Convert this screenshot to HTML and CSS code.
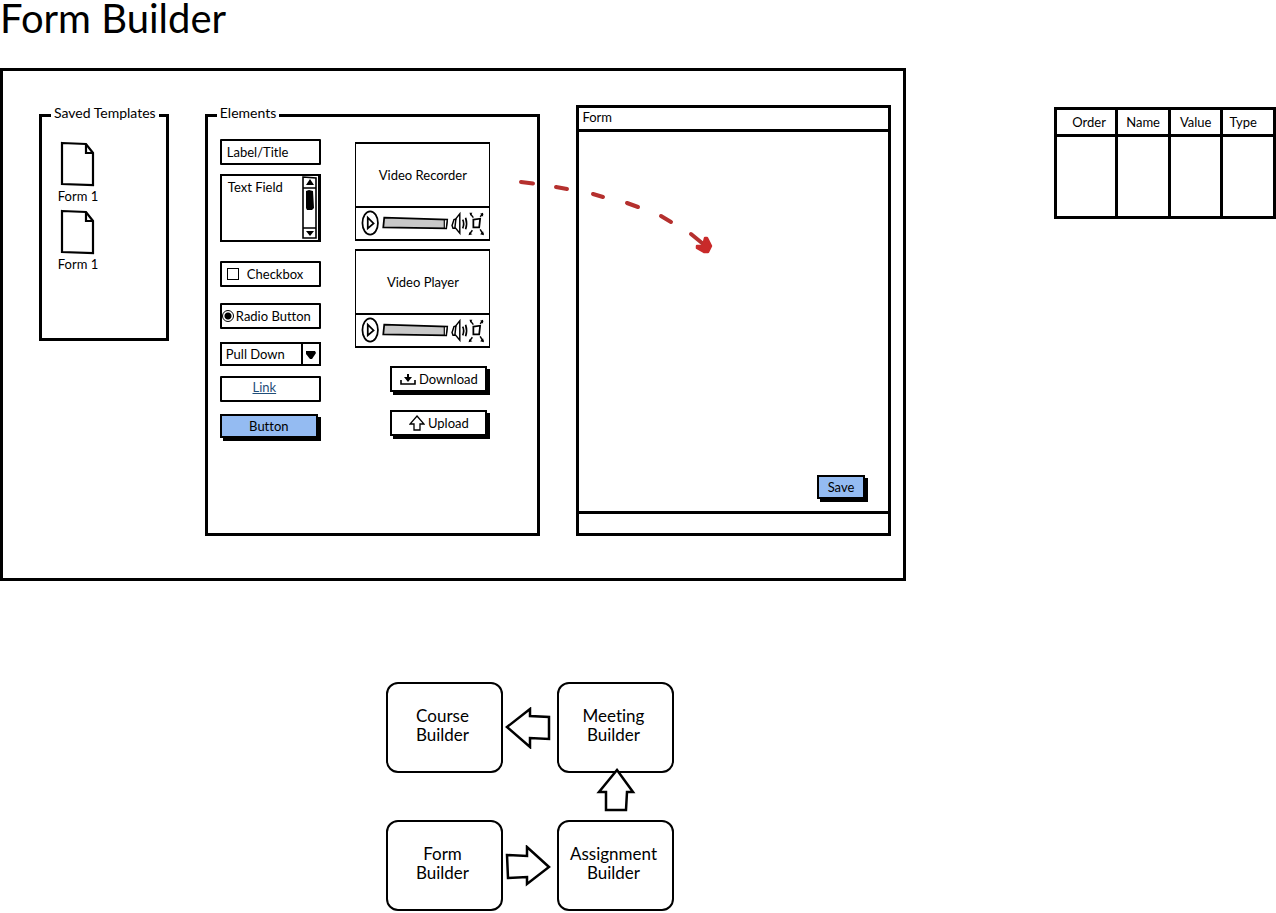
FILE: index.html
```html
<!DOCTYPE html>
<html lang="en">
<head>
<meta charset="utf-8">
<title>Form Builder</title>
<link rel="stylesheet" href="styles.css">
</head>
<body>
<svg class="defs" aria-hidden="true">
  <symbol id="file" viewBox="0 0 36 46">
    <path d="M2 2 26 3 33 12V44L2 43Z" fill="#fff" stroke="#000" stroke-width="2.2"/>
    <path d="M26 3V12L33 12" fill="none" stroke="#000" stroke-width="2.2"/>
  </symbol>
  <symbol id="controls" viewBox="0 0 131 32">
    <g fill="none" stroke="#000" stroke-width="1.8">
      <ellipse cx="11.500" cy="15.500" rx="8" ry="12"/>
      <path d="M9 10 15 16 9 21Z"/>
      <path d="M26 10 91 12 90 21 25 20Z" fill="#c8c8c8"/>
      <path d="M88 12 91 12 90 21 88 21Z" fill="#fff" stroke-width="1.2"/>
      <path d="M101 11 98 12 96 18 97 21 100 21M100 11 104 6V26L99 20Z" stroke-width="1.5"/>
      <path d="M107 12Q109 16 107 21M110 10Q112 16 110 22" stroke-width="1.7"/>
      <path d="M118 12 125 11 124 20 118 20Z"/>
      <path d="M115 6 118 10M128 6 125 9M114 27 117 23M128 27 125 22" stroke-width="1.5"/>
    </g>
    <path d="M114 5 117 5 115 8ZM128 5 125 6 128 9ZM113 28 114 25 117 27ZM129 28 125 27 128 24Z"/>
  </symbol>
</svg>
<main>
  <h1>Form Builder</h1>
  <div class="top">
    <section class="board">
      <fieldset class="saved">
        <legend>Saved Templates</legend>
        <figure><svg class="file"><use href="#file"/></svg><figcaption>Form 1</figcaption></figure>
        <figure><svg class="file"><use href="#file"/></svg><figcaption>Form 1</figcaption></figure>
      </fieldset>

      <fieldset class="elements">
        <legend>Elements</legend>
        <div class="palette">
          <div class="column">
            <div class="item title-item">Label/Title</div>
            <div class="textbox">
              <textarea aria-label="Text Field">Text Field</textarea>
              <svg class="scrollbar" viewBox="0 0 16 64" aria-hidden="true">
                <path d="M1 1 14 2V62H1ZM1 12H14M1 52H14" fill="#fff" stroke="#000" stroke-width="1.6"/>
                <path d="M4 9 8 3 12 9ZM4 55H12L8 60ZM4 15 7 14 11 15 12 32 10 34H5L4 32Z"/>
              </svg>
            </div>
            <label class="item check-item"><input type="checkbox">Checkbox</label>
            <label class="item radio-item"><input type="radio" checked>Radio Button</label>
            <div class="pulldown">
              <select aria-label="Pull Down"><option>Pull Down</option></select>
              <svg viewBox="0 0 16 20" aria-hidden="true"><path d="M3 7 12 7 13 9 9 15H7L3 10Z"/></svg>
            </div>
            <div class="item link-item"><a href="#link">Link</a></div>
            <button class="btn blue">Button</button>
          </div>
          <div class="column media">
            <div class="video"><p>Video Recorder</p><svg><use href="#controls"/></svg></div>
            <div class="video"><p>Video Player</p><svg><use href="#controls"/></svg></div>
            <button class="btn"><svg viewBox="0 0 16 12"><path d="M1 7V11H15V7" fill="none" stroke="#000" stroke-width="1.6"/><path d="M7 1H9V4H12L8 9 4 4H7Z"/></svg>Download</button>
            <button class="btn"><svg class="up" viewBox="0 0 16 16"><path d="M8 1 15 9H11V15H5V9H1Z" fill="#fff" stroke="#000" stroke-width="1.3"/></svg>Upload</button>
          </div>
        </div>
      </fieldset>

      <section class="window">
        <header>Form</header>
        <div class="canvas"><button class="btn blue">Save</button></div>
        <footer></footer>
      </section>

      <svg class="drag" viewBox="0 0 200 80" aria-hidden="true">
        <path d="M8 7 20 8.500M43 12 54 14M80 19 90 22M114 28 125 32M148 41 158 47M178 59 189 68" fill="none" stroke="#b5302e" stroke-width="4" stroke-linecap="round"/>
        <path d="M192 63 194 63 198 71 195 77 191 77 184 73 184 71 190 71Z" fill="#c92a2a" stroke="#c92a2a" stroke-width="2.5" stroke-linejoin="round"/>
      </svg>
    </section>

    <table>
      <colgroup><col class="wide"><col><col><col></colgroup>
      <thead><tr><th>Order</th><th>Name</th><th>Value</th><th>Type</th></tr></thead>
      <tbody><tr><td></td><td></td><td></td><td></td></tr></tbody>
    </table>
  </div>

  <section class="flow">
    <div class="node">Course<br>Builder</div>
    <svg class="arrow" viewBox="0 0 46 42"><path d="M2 20 25 2V9L44 10V32L25 31V40Z"/></svg>
    <div class="node">Meeting<br>Builder</div>
    <svg class="arrow up-arrow" viewBox="0 0 40 44"><path d="M21 2 37 24 31 24 30 42 10 42 10 24 3 24Z"/></svg>
    <div class="node">Form<br>Builder</div>
    <svg class="arrow" viewBox="0 0 46 42"><path d="M2 10 22 11V2L44 22 22 39V32L3 33Z"/></svg>
    <div class="node">Assignment<br>Builder</div>
  </section>
</main>
</body>
</html>
```
FILE: styles.css
```css
* { box-sizing: border-box; }
body {
  margin: 0;
  background: #fff;
  color: #000;
  font: 13px/16px Lato, "Liberation Sans", sans-serif;
  font-variant-ligatures: none;
}
h1 { margin: 0; padding-bottom: 32px; font-size: 40px; line-height: 36px; font-weight: 400; }
input, textarea, select, button { margin: 0; font: inherit; color: inherit; }
.defs { display: none; }
svg { display: block; }

.top { display: grid; grid-template-columns: 906fr 222fr; column-gap: 148px; align-items: start; }
.board {
  position: relative;
  display: grid;
  grid-template-columns: 130fr 336fr 315fr;
  column-gap: 36px;
  padding: 34px 12px 42px 36px;
  border: 3px solid #000;
}
fieldset { min-width: 0; margin: 0; border: 3px solid #000; }
legend { margin: 0; padding: 0 3px 4px; font-size: 14px; white-space: nowrap; }
.saved { align-self: start; padding: 16px 16px 61px; }
.saved legend { margin-left: -7px; }
figure { display: flex; flex-direction: column; align-items: center; width: 40px; margin: 0 0 4px; white-space: nowrap; }
.file { width: 36px; height: 46px; }
figcaption { margin-top: 1px; padding-bottom: 1px; }

.elements { padding: 0 12px 89px; }
.elements legend { margin-left: -3px; }
.palette { display: flex; justify-content: space-between; padding-top: 14px; padding-right: 35px; }
.column { display: flex; flex-direction: column; width: 101px; }
.item { display: flex; align-items: center; height: 26px; border: 2px solid #000; border-radius: 1px; white-space: nowrap; }
.title-item { padding-left: 5px; }
.textbox { display: flex; height: 68px; margin-top: 9px; border: 2px solid #000; border-right-width: 3px; }
textarea { flex: 1; min-width: 0; padding: 3px 0 0 6px; border: 0; outline: 0; resize: none; overflow: hidden; background: none; }
.scrollbar { width: 16px; height: 64px; }
.check-item { gap: 8px; margin-top: 19px; padding-left: 5px; }
.radio-item { gap: 2px; margin-top: 16px; }
input { appearance: none; flex: none; width: 12px; height: 12px; border: 1px solid #000; background: #fff; }
input[type="radio"] { border-radius: 50%; background: radial-gradient(#000 0 3px, #fff 4px); }
.pulldown { display: flex; align-items: center; height: 24px; margin-top: 13px; border: 2px solid #000; }
select { flex: 1; min-width: 0; height: 20px; padding: 0 0 0 4px; border: 0; border-right: 2px solid #000; appearance: none; background: none; }
.pulldown svg { width: 16px; height: 20px; }
.link-item { justify-content: center; margin-top: 10px; padding: 0 12px 4px 0; }
a { color: #1f4e79; }
.btn {
  display: flex; align-items: center; justify-content: center; gap: 3px;
  height: 26px; margin: 0 3px 3px 0; padding: 0;
  border: 2px solid #000; background: #fff; box-shadow: 3px 3px #000;
}
.blue { background: #94bbf2; }
.column > .blue { height: 24px; margin-top: 12px; }
.btn svg { width: 16px; height: 12px; }
.btn .up { height: 16px; }
.media { width: 135px; padding-top: 3px; }
.video { height: 99px; margin-bottom: 8px; border: 2px solid #000; border-left-width: 1px; border-right-width: 1px; }
.video p { display: flex; align-items: center; justify-content: center; height: 64px; margin: 0; border-bottom: 2px solid #000; }
.video svg { width: 100%; height: 31px; }
.media .btn { width: 97px; margin-top: 10px; margin-bottom: 8px; align-self: flex-end; }

.window { display: flex; flex-direction: column; border: 3px solid #000; }
.window header { height: 24px; padding: 1px 3px; border-bottom: 3px solid #000; }
.canvas { flex: 1; display: flex; align-items: flex-end; justify-content: flex-end; padding: 0 20px 9px; }
.canvas .btn { width: 48px; height: 24px; }
.window footer { height: 22px; border-top: 3px solid #000; }
.drag { position: absolute; left: 510px; top: 104px; width: 200px; height: 80px; pointer-events: none; }

table { width: 100%; margin-top: 39px; border-collapse: collapse; table-layout: fixed; }
.wide { width: 28%; }
th, td { padding: 0; border: 3px solid #000; font-weight: 400; }
th { height: 27px; }
th:first-child { padding-left: 6px; }
th:last-child { padding-right: 10px; }
td { height: 82px; }

.flow {
  display: grid;
  grid-template-columns: 117px 54px 117px;
  grid-template-rows: 91px 47px 91px;
  place-items: center;
  margin: 101px 0 0 386px;
}
.node {
  display: flex; align-items: center; justify-content: center;
  width: 117px; height: 91px; padding: 0 4px 5px 0;
  border: 2px solid #000; border-radius: 12px;
  font-size: 17px; line-height: 19px; text-align: center;
}
.arrow { width: 46px; height: 42px; margin-right: 4px; fill: #fff; stroke: #000; stroke-width: 2.5; }
.up-arrow { grid-column: 3; width: 40px; height: 44px; margin: 0 0 14px; z-index: 1; }
.up-arrow + .node { grid-column: 1; }
```
